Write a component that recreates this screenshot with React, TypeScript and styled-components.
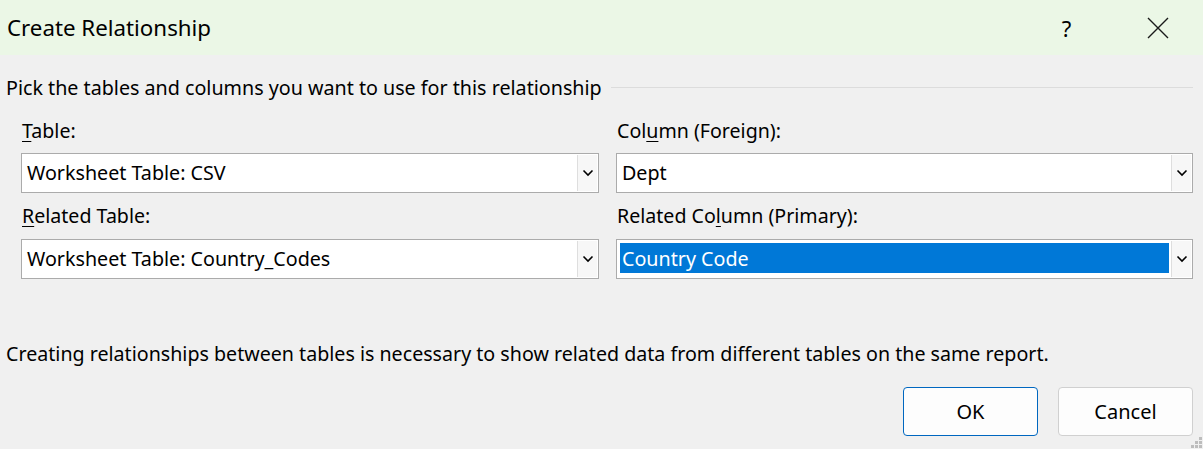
import React from "react";
import styled, { createGlobalStyle } from "styled-components";

const Global = createGlobalStyle`
  html, body { margin: 0; padding: 0; background: #f0f0f0; }
  body { font-family: "Noto Sans", "Open Sans", sans-serif; color: #000; }
  * { box-sizing: border-box; }
`;

const Dialog = styled.div`
  width: 1203px;
  height: 449px;
  background: #f0f0f0;
  display: flex;
  flex-direction: column;
  overflow: hidden;
  position: relative;
`;

const TitleBar = styled.div`
  height: 55px;
  flex: none;
  background: #ebf7e6;
  display: flex;
  align-items: center;
  padding-left: 7px;
`;

const Title = styled.div`
  flex: 1;
  font-size: 22.3px;
  line-height: 26px;
  padding-top: 1px;
`;

const TitleButton = styled.div`
  width: 91px;
  height: 55px;
  display: flex;
  align-items: center;
  justify-content: center;
  font-size: 22px;
`;

const Body = styled.div`
  flex: 1;
  display: flex;
  flex-direction: column;
  padding: 0 10px 0 6px;
`;

const Intro = styled.div`
  margin-top: 20px;
  height: 24px;
  display: flex;
  align-items: center;
  gap: 9px;
  font-size: 19.7px;
  white-space: nowrap;
`;

const Rule = styled.div`
  flex: 1;
  height: 1px;
  background: #dcdcdc;
`;

const Grid = styled.div`
  margin-top: 20px;
  padding-left: 15px;
  display: grid;
  grid-template-columns: 578px 577px;
  column-gap: 17px;
`;

const Field = styled.div`
  display: flex;
  flex-direction: column;
`;

const Label = styled.div<{ $first?: boolean }>`
  height: 24px;
  line-height: 24px;
  font-size: 19.6px;
  margin-top: ${(p) => (p.$first ? "0" : "11px")};
  margin-bottom: ${(p) => (p.$first ? "10px" : "11px")};
  padding-left: 1px;
  white-space: nowrap;
  u { text-underline-offset: 3px; text-decoration-thickness: 1px; }
`;

const Select = styled.div`
  height: 40px;
  border: 1px solid #ababab;
  background: #fff;
  display: flex;
  padding: 3px 1px 5px 3px;
`;

const Value = styled.div<{ $selected?: boolean }>`
  flex: 1;
  display: flex;
  align-items: center;
  padding-left: 2px;
  font-size: 19.7px;
  white-space: nowrap;
  background: ${(p) => (p.$selected ? "#0078d7" : "transparent")};
  color: ${(p) => (p.$selected ? "#fff" : "#000")};
  margin-right: 2px;
`;

const Arrow = styled.div`
  width: 20px;
  margin: -2px 0 -4px 0;
  border-left: 1px solid #dedede;
  background: #f7f7f7;
  display: flex;
  align-items: center;
  justify-content: center;
`;

const Note = styled.div`
  margin-top: 63px;
  height: 24px;
  line-height: 24px;
  font-size: 19.65px;
  white-space: nowrap;
`;

const Buttons = styled.div`
  margin-top: 21px;
  display: flex;
  justify-content: flex-end;
  gap: 20px;
`;

const Button = styled.div<{ $default?: boolean }>`
  width: 135px;
  height: 49px;
  border-radius: 4px;
  background: #fdfdfd;
  border: 1px solid ${(p) => (p.$default ? "#0067c0" : "#d0d0d0")};
  display: flex;
  align-items: center;
  justify-content: center;
  font-size: 20px;
`;

const Grip = styled.svg`
  position: absolute;
  right: 0;
  bottom: 0;
`;

const Chevron = () => (
  <svg width="12" height="8" viewBox="0 0 12 8">
    <path d="M1.5 1.5 L6 6 L10.5 1.5" fill="none" stroke="#000" strokeWidth="1.6" />
  </svg>
);

const Drop = ({ value, selected }: { value: string; selected?: boolean }) => (
  <Select>
    <Value $selected={selected}>{value}</Value>
    <Arrow>
      <Chevron />
    </Arrow>
  </Select>
);

export default function App() {
  return (
    <>
      <Global />
      <Dialog>
        <TitleBar>
          <Title>Create Relationship</Title>
          <TitleButton>?</TitleButton>
          <TitleButton>
            <svg width="22" height="22" viewBox="0 0 22 22">
              <path d="M1 1 L21 21 M21 1 L1 21" stroke="#1a1a1a" strokeWidth="1.4" fill="none" />
            </svg>
          </TitleButton>
        </TitleBar>
        <Body>
          <Intro>
            <span>Pick the tables and columns you want to use for this relationship</span>
            <Rule />
          </Intro>
          <Grid>
            <Field>
              <Label $first>
                <u>T</u>able:
              </Label>
              <Drop value="Worksheet Table: CSV" />
              <Label>
                <u>R</u>elated Table:
              </Label>
              <Drop value="Worksheet Table: Country_Codes" />
            </Field>
            <Field>
              <Label $first>
                Col<u>u</u>mn (Foreign):
              </Label>
              <Drop value="Dept" />
              <Label>
                Related Co<u>l</u>umn (Primary):
              </Label>
              <Drop value="Country Code" selected />
            </Field>
          </Grid>
          <Note>
            Creating relationships between tables is necessary to show related data from different tables on the same report.
          </Note>
          <Buttons>
            <Button $default>OK</Button>
            <Button>Cancel</Button>
          </Buttons>
        </Body>
        <Grip width="14" height="14" viewBox="0 0 14 14">
          {[
            [10, 2],
            [6, 6],
            [10, 6],
            [2, 10],
            [6, 10],
            [10, 10],
          ].map(([x, y], i) => (
            <rect key={i} x={x} y={y} width="3" height="3" fill="#bdbdbd" />
          ))}
        </Grip>
      </Dialog>
    </>
  );
}
